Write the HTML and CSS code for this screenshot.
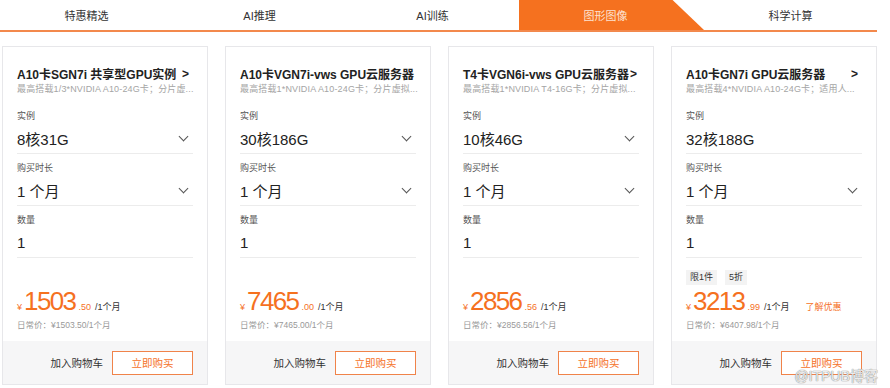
FILE: index.html
```html
<!DOCTYPE html>
<html lang="zh-CN">
<head>
<meta charset="utf-8">
<title>GPU</title>
<link rel="stylesheet" href="styles.css">
</head>
<body>
<div class="page">
  <div class="tabs">
    <div class="tab">特惠精选</div>
    <div class="tab">AI推理</div>
    <div class="tab">AI训练</div>
    <div class="tab active">图形图像</div>
    <div class="tab">科学计算</div>
  </div>
  <div class="cards">
    <div class="card">
      <div class="card-body">
        <div class="title"><span class="title-text">A10卡SGN7i 共享型GPU实例</span><span class="arrow">&gt;</span></div>
        <div class="sub">最高搭载1/3*NVIDIA A10-24G卡；分片虚...</div>
        <div class="field"><div class="label">实例</div><div class="value"><span>8核31G</span><span class="chev"></span></div></div>
        <div class="field"><div class="label">购买时长</div><div class="value"><span>1 个月</span><span class="chev"></span></div></div>
        <div class="field"><div class="label">数量</div><div class="value"><span>1</span></div></div>
        <div class="price-area">
          <div class="price"><span class="yen">¥</span><span class="num">1503</span><span class="dec">.50</span><span class="unit">/1个月</span></div>
          <div class="orig">日常价：¥1503.50/1个月</div>
        </div>
      </div>
      <div class="card-foot"><span class="cart">加入购物车</span><span class="buy">立即购买</span></div>
    </div>
    <div class="card">
      <div class="card-body">
        <div class="title"><span class="title-text">A10卡VGN7i-vws GPU云服务器</span></div>
        <div class="sub">最高搭载1*NVIDIA A10-24G卡；分片虚拟...</div>
        <div class="field"><div class="label">实例</div><div class="value"><span>30核186G</span><span class="chev"></span></div></div>
        <div class="field"><div class="label">购买时长</div><div class="value"><span>1 个月</span><span class="chev"></span></div></div>
        <div class="field"><div class="label">数量</div><div class="value"><span>1</span></div></div>
        <div class="price-area">
          <div class="price"><span class="yen">¥</span><span class="num">7465</span><span class="dec">.00</span><span class="unit">/1个月</span></div>
          <div class="orig">日常价：¥7465.00/1个月</div>
        </div>
      </div>
      <div class="card-foot"><span class="cart">加入购物车</span><span class="buy">立即购买</span></div>
    </div>
    <div class="card">
      <div class="card-body">
        <div class="title"><span class="title-text">T4卡VGN6i-vws GPU云服务器</span><span class="arrow tight">&gt;</span></div>
        <div class="sub">最高搭载1*NVIDIA T4-16G卡；分片虚拟...</div>
        <div class="field"><div class="label">实例</div><div class="value"><span>10核46G</span><span class="chev"></span></div></div>
        <div class="field"><div class="label">购买时长</div><div class="value"><span>1 个月</span><span class="chev"></span></div></div>
        <div class="field"><div class="label">数量</div><div class="value"><span>1</span></div></div>
        <div class="price-area">
          <div class="price"><span class="yen">¥</span><span class="num">2856</span><span class="dec">.56</span><span class="unit">/1个月</span></div>
          <div class="orig">日常价：¥2856.56/1个月</div>
        </div>
      </div>
      <div class="card-foot"><span class="cart">加入购物车</span><span class="buy">立即购买</span></div>
    </div>
    <div class="card">
      <div class="card-body">
        <div class="title"><span class="title-text">A10卡GN7i GPU云服务器</span><span class="arrow">&gt;</span></div>
        <div class="sub">最高搭载4*NVIDIA A10-24G卡；适用人...</div>
        <div class="field"><div class="label">实例</div><div class="value"><span>32核188G</span></div></div>
        <div class="field"><div class="label">购买时长</div><div class="value"><span>1 个月</span><span class="chev"></span></div></div>
        <div class="field"><div class="label">数量</div><div class="value"><span>1</span></div></div>
        <div class="price-area">
          <div class="tags"><span class="tag">限1件</span><span class="tag">5折</span></div>
          <div class="price"><span class="yen">¥</span><span class="num">3213</span><span class="dec">.99</span><span class="unit">/1个月</span><span class="promo">了解优惠</span></div>
          <div class="orig">日常价：¥6407.98/1个月</div>
        </div>
      </div>
      <div class="card-foot"><span class="cart">加入购物车</span><span class="buy">立即购买</span></div>
    </div>
  </div>
  <div class="watermark">@ITPUB博客</div>
</div>
</body>
</html>
```

FILE: styles.css
```css
* { box-sizing: border-box; }
html, body { margin: 0; padding: 0; background: #fff; }
body {
  font-family: "Liberation Sans", "Noto Sans CJK SC", sans-serif;
  color: #333;
  width: 890px;
  height: 388px;
  overflow: hidden;
}
.page { position: relative; width: 890px; height: 388px; }

.tabs {
  display: flex;
  width: 877px;
  height: 32px;
  border-bottom: 2px solid #f3894c;
}
.tab {
  flex: 1;
  display: flex;
  align-items: center;
  justify-content: center;
  font-size: 11px;
  color: #333;
  padding-bottom: 1px;
}
.tab.active {
  background: #f5711f;
  color: #fde3d2;
  clip-path: polygon(0 0, 83% 0, 100% 100%, 0 100%);
  padding-right: 12px;
}

.cards {
  display: grid;
  grid-template-columns: repeat(4, 206px);
  column-gap: 17px;
  padding-left: 2px;
  margin-top: 14px;
}
.card {
  height: 339px;
  border: 1px solid #e7e7ea;
  display: flex;
  flex-direction: column;
  background: #fff;
}
.card-body {
  flex: 1;
  display: flex;
  flex-direction: column;
  padding: 18px 14px 0 14px;
  min-width: 0;
}
.title {
  display: flex;
  align-items: center;
  height: 17px;
  font-size: 12px;
  font-weight: bold;
  color: #222;
  white-space: nowrap;
}
.title-text { flex: 0 1 auto; }
.arrow {
  margin-left: auto;
  padding-right: 4px;
  font-size: 12px;
  font-weight: bold;
}
.arrow.tight { margin-left: 1px; padding-right: 0; }
.sub {
  margin-top: 1px;
  font-size: 9px;
  line-height: 13px;
  color: #a5a5a5;
  white-space: nowrap;
  margin-bottom: 6px;
  letter-spacing: 0.15px;
}
.field {
  margin-top: 7px;
  border-bottom: 1px solid #ececec;
  padding-bottom: 4px;
}
.label {
  font-size: 9px;
  line-height: 14px;
  color: #555;
}
.value {
  margin-top: 5px;
  display: flex;
  align-items: center;
  justify-content: space-between;
  height: 21px;
  font-size: 15px;
  color: #222;
}
.chev {
  width: 7px;
  height: 7px;
  border-right: 1.2px solid #555;
  border-bottom: 1.2px solid #555;
  transform: rotate(45deg);
  margin-right: 6px;
  margin-top: -4px;
}
.price-area {
  margin-top: auto;
  padding-bottom: 10px;
}
.tags { display: flex; gap: 8px; margin-bottom: 3px; }
.tag {
  background: #f3f3f3;
  font-size: 9px;
  line-height: 15px;
  padding: 0 4px;
  color: #333;
}
.price {
  display: flex;
  align-items: baseline;
  color: #f5711f;
  height: 26px;
}
.yen { font-size: 9px; margin-right: 2px; }
.num { font-size: 26px; letter-spacing: -1.6px; line-height: 26px; }
.dec { font-size: 9px; margin-left: 3px; }
.unit { font-size: 9px; color: #333; margin-left: 4px; }
.promo { font-size: 9px; margin-left: 16px; }
.orig {
  margin-top: 5px;
  font-size: 8.5px;
  line-height: 12px;
  color: #999;
}
.card-foot {
  height: 43px;
  background: #f6f6f7;
  display: flex;
  align-items: center;
  justify-content: flex-end;
  padding-right: 14px;
  gap: 9px;
}
.cart { font-size: 10.5px; color: #333; }
.buy {
  width: 81px;
  height: 24px;
  border: 1px solid #f0834a;
  color: #f5711f;
  font-size: 10.5px;
  display: flex;
  align-items: center;
  justify-content: center;
  background: #fff;
}
.watermark {
  position: absolute;
  right: 12px;
  bottom: 3px;
  font-size: 14px;
  color: rgba(255,255,255,0.85);
  text-shadow: 0 0 1px #888, 0 0 1px #888;
}
```
